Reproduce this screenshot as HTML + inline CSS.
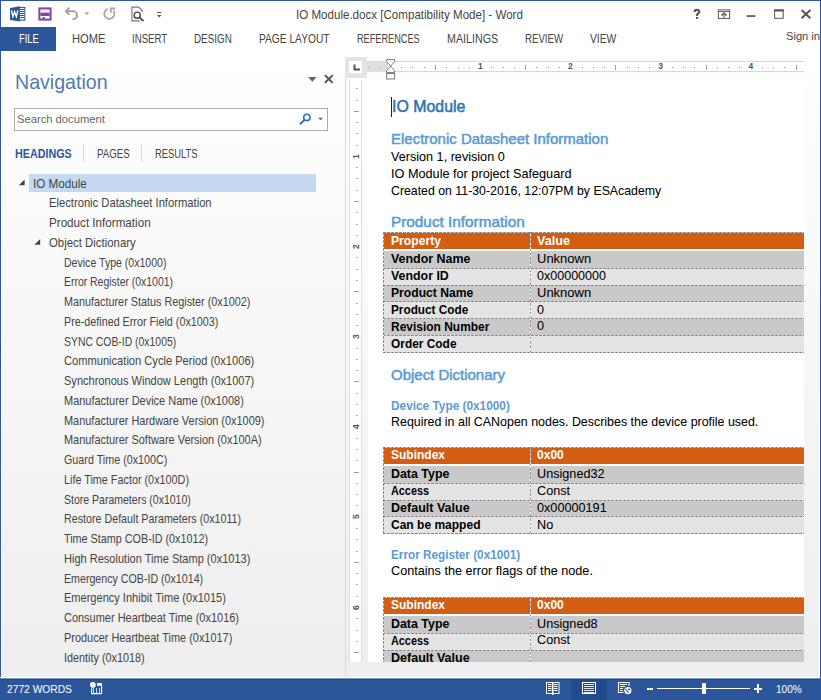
<!DOCTYPE html>
<html><head><meta charset="utf-8">
<style>
*{margin:0;padding:0;box-sizing:border-box}
html,body{width:821px;height:700px;overflow:hidden;background:#fff}
body{position:relative;font-family:"Liberation Sans",sans-serif}
.a{position:absolute}
.t{position:absolute;white-space:pre;transform-origin:0 0;font-family:"Liberation Sans",sans-serif}
.dh{position:absolute;height:1px;background:repeating-linear-gradient(90deg,#8a8a8a 0 2.7px,#fff 2.7px 4px)}
.dv{position:absolute;width:1px;background:repeating-linear-gradient(180deg,#8a8a8a 0 2.7px,#fff 2.7px 4px)}
</style></head><body>
<!-- window border -->
<div class="a" style="left:0;top:0;width:821px;height:1px;background:#2b579a"></div>
<div class="a" style="left:0;top:0;width:1px;height:700px;background:#2b579a"></div>
<div class="a" style="left:820px;top:0;width:1px;height:700px;background:#2b579a;z-index:10"></div>

<!-- FILE tab -->
<div class="a" style="left:1px;top:27px;width:55px;height:24px;background:#2b579a"></div>

<!-- nav pane -->
<div class="a" style="left:1px;top:51px;width:344px;height:626px;background:linear-gradient(#ffffff,#eeeeee)"></div>
<div class="a" style="left:345px;top:57px;width:1px;height:621px;background:#d9d9d9"></div>
<!-- doc area -->
<div class="a" style="left:346px;top:51px;width:473px;height:626px;background:linear-gradient(#ffffff,#eeeeee)"></div>

<div class="a" style="left:1px;top:51px;width:1px;height:627px;background:#fff"></div>
<div class="a" style="left:819px;top:51px;width:1px;height:627px;background:#fff"></div>
<!-- search box -->
<div class="a" style="left:14px;top:108px;width:314px;height:23px;border:1px solid #ababab;background:#fff"></div>
<!-- tab separators -->
<div class="a" style="left:83px;top:144px;width:1px;height:18px;background:#dcdcdc"></div>
<div class="a" style="left:141px;top:144px;width:1px;height:18px;background:#dcdcdc"></div>
<!-- highlight -->
<div class="a" style="left:29px;top:174px;width:287px;height:18px;background:#c5d9f1"></div>

<!-- page -->
<div class="a" style="left:368px;top:80px;width:436px;height:582px;background:#fff"></div>

<!-- ruler tab box -->
<div class="a" style="left:345px;top:57px;width:22px;height:21px;background:#e4e4e4"></div>
<div class="a" style="left:349px;top:61px;width:13px;height:12px;background:#fff"></div>
<!-- horizontal ruler -->
<div class="a" style="left:367px;top:61px;width:21px;height:11px;background:#dedede"></div>
<div class="a" style="left:388px;top:61px;width:416px;height:11px;background:#fff;border-top:1px solid #d8d8d8;border-bottom:1px solid #d8d8d8"></div>
<!-- vertical ruler -->
<div class="a" style="left:349px;top:80px;width:13px;height:582px;background:#fff;border-left:1px solid #dedede;border-right:1px solid #dedede"></div>

<!-- tables -->
<div class="a" style="left:384px;top:233px;width:146px;height:16px;background:#d35d13"></div>
<div class="a" style="left:531px;top:233px;width:273px;height:16px;background:#d35d13"></div>
<div class="a" style="left:384px;top:251px;width:420px;height:17px;background:#c9c9c9"></div>
<div class="a" style="left:384px;top:269px;width:420px;height:16px;background:#e4e4e4"></div>
<div class="a" style="left:384px;top:286px;width:420px;height:15px;background:#c9c9c9"></div>
<div class="a" style="left:384px;top:302px;width:420px;height:16px;background:#e4e4e4"></div>
<div class="a" style="left:384px;top:319px;width:420px;height:16px;background:#c9c9c9"></div>
<div class="a" style="left:384px;top:336px;width:420px;height:16px;background:#e4e4e4"></div>
<div class="dh" style="left:383px;top:232px;width:421px"></div>
<div class="dh" style="left:383px;top:268px;width:421px"></div>
<div class="dh" style="left:383px;top:285px;width:421px"></div>
<div class="dh" style="left:383px;top:301px;width:421px"></div>
<div class="dh" style="left:383px;top:318px;width:421px"></div>
<div class="dh" style="left:383px;top:335px;width:421px"></div>
<div class="dh" style="left:383px;top:352px;width:421px"></div>
<div class="dv" style="left:383px;top:232px;height:121px"></div>
<div class="dv" style="left:530px;top:232px;height:121px;background:repeating-linear-gradient(180deg,#a0a0a0 0 2.5px,#fff 2.5px 4.2px)"></div>
<div class="a" style="left:384px;top:448px;width:146px;height:16px;background:#d35d13"></div>
<div class="a" style="left:531px;top:448px;width:273px;height:16px;background:#d35d13"></div>
<div class="a" style="left:384px;top:466px;width:420px;height:17px;background:#c9c9c9"></div>
<div class="a" style="left:384px;top:484px;width:420px;height:16px;background:#e4e4e4"></div>
<div class="a" style="left:384px;top:501px;width:420px;height:15px;background:#c9c9c9"></div>
<div class="a" style="left:384px;top:517px;width:420px;height:16px;background:#e4e4e4"></div>
<div class="dh" style="left:383px;top:447px;width:421px"></div>
<div class="dh" style="left:383px;top:483px;width:421px"></div>
<div class="dh" style="left:383px;top:500px;width:421px"></div>
<div class="dh" style="left:383px;top:516px;width:421px"></div>
<div class="dh" style="left:383px;top:533px;width:421px"></div>
<div class="dv" style="left:383px;top:447px;height:87px"></div>
<div class="dv" style="left:530px;top:447px;height:87px;background:repeating-linear-gradient(180deg,#a0a0a0 0 2.5px,#fff 2.5px 4.2px)"></div>
<div class="a" style="left:384px;top:598px;width:146px;height:16px;background:#d35d13"></div>
<div class="a" style="left:531px;top:598px;width:273px;height:16px;background:#d35d13"></div>
<div class="a" style="left:384px;top:616px;width:420px;height:17px;background:#c9c9c9"></div>
<div class="a" style="left:384px;top:634px;width:420px;height:16px;background:#e4e4e4"></div>
<div class="a" style="left:384px;top:651px;width:420px;height:11px;background:#c9c9c9"></div>
<div class="dh" style="left:383px;top:597px;width:421px"></div>
<div class="dh" style="left:383px;top:633px;width:421px"></div>
<div class="dh" style="left:383px;top:650px;width:421px"></div>
<div class="dv" style="left:383px;top:597px;height:65px"></div>
<div class="dv" style="left:530px;top:597px;height:65px;background:repeating-linear-gradient(180deg,#a0a0a0 0 2.5px,#fff 2.5px 4.2px)"></div>
<div class="a" style="left:401.1px;top:67px;width:1px;height:1px;background:#888"></div>
<div class="a" style="left:412.4px;top:67px;width:1px;height:1px;background:#888"></div>
<div class="a" style="left:423.6px;top:67px;width:1px;height:1px;background:#888"></div>
<div class="a" style="left:434.9px;top:65px;width:1px;height:5px;background:#999"></div>
<div class="a" style="left:446.2px;top:67px;width:1px;height:1px;background:#888"></div>
<div class="a" style="left:457.5px;top:67px;width:1px;height:1px;background:#888"></div>
<div class="a" style="left:468.7px;top:67px;width:1px;height:1px;background:#888"></div>
<div class="a" style="left:491.3px;top:67px;width:1px;height:1px;background:#888"></div>
<div class="a" style="left:502.6px;top:67px;width:1px;height:1px;background:#888"></div>
<div class="a" style="left:513.8px;top:67px;width:1px;height:1px;background:#888"></div>
<div class="a" style="left:525.1px;top:65px;width:1px;height:5px;background:#999"></div>
<div class="a" style="left:536.4px;top:67px;width:1px;height:1px;background:#888"></div>
<div class="a" style="left:547.6px;top:67px;width:1px;height:1px;background:#888"></div>
<div class="a" style="left:558.9px;top:67px;width:1px;height:1px;background:#888"></div>
<div class="a" style="left:581.5px;top:67px;width:1px;height:1px;background:#888"></div>
<div class="a" style="left:592.8px;top:67px;width:1px;height:1px;background:#888"></div>
<div class="a" style="left:604.0px;top:67px;width:1px;height:1px;background:#888"></div>
<div class="a" style="left:615.3px;top:65px;width:1px;height:5px;background:#999"></div>
<div class="a" style="left:626.6px;top:67px;width:1px;height:1px;background:#888"></div>
<div class="a" style="left:637.9px;top:67px;width:1px;height:1px;background:#888"></div>
<div class="a" style="left:649.1px;top:67px;width:1px;height:1px;background:#888"></div>
<div class="a" style="left:671.7px;top:67px;width:1px;height:1px;background:#888"></div>
<div class="a" style="left:683.0px;top:67px;width:1px;height:1px;background:#888"></div>
<div class="a" style="left:694.2px;top:67px;width:1px;height:1px;background:#888"></div>
<div class="a" style="left:705.5px;top:65px;width:1px;height:5px;background:#999"></div>
<div class="a" style="left:716.8px;top:67px;width:1px;height:1px;background:#888"></div>
<div class="a" style="left:728.0px;top:67px;width:1px;height:1px;background:#888"></div>
<div class="a" style="left:739.3px;top:67px;width:1px;height:1px;background:#888"></div>
<div class="a" style="left:761.9px;top:67px;width:1px;height:1px;background:#888"></div>
<div class="a" style="left:773.2px;top:67px;width:1px;height:1px;background:#888"></div>
<div class="a" style="left:784.4px;top:67px;width:1px;height:1px;background:#888"></div>
<div class="a" style="left:795.7px;top:65px;width:1px;height:5px;background:#999"></div>
<div class="t" style="left:477.9px;top:62.3px;font-size:8.5px;line-height:8.5px;font-weight:700;color:#555">1</div>
<div class="t" style="left:568.1px;top:62.3px;font-size:8.5px;line-height:8.5px;font-weight:700;color:#555">2</div>
<div class="t" style="left:658.3px;top:62.3px;font-size:8.5px;line-height:8.5px;font-weight:700;color:#555">3</div>
<div class="t" style="left:748.5px;top:62.3px;font-size:8.5px;line-height:8.5px;font-weight:700;color:#555">4</div>
<div class="a" style="left:355.5px;top:88.2px;width:2px;height:1px;background:#b0b0b0"></div>
<div class="a" style="left:355.5px;top:99.5px;width:2px;height:1px;background:#b0b0b0"></div>
<div class="a" style="left:354px;top:110.8px;width:5px;height:1px;background:#999"></div>
<div class="a" style="left:355.5px;top:122.1px;width:2px;height:1px;background:#b0b0b0"></div>
<div class="a" style="left:355.5px;top:133.4px;width:2px;height:1px;background:#b0b0b0"></div>
<div class="a" style="left:355.5px;top:144.6px;width:2px;height:1px;background:#b0b0b0"></div>
<div class="t" style="left:351.5px;top:150.6px;font-size:8.5px;line-height:8.5px;font-weight:700;color:#555;transform:rotate(-90deg);transform-origin:4px 4px">1</div>
<div class="a" style="left:355.5px;top:167.2px;width:2px;height:1px;background:#b0b0b0"></div>
<div class="a" style="left:355.5px;top:178.4px;width:2px;height:1px;background:#b0b0b0"></div>
<div class="a" style="left:355.5px;top:189.7px;width:2px;height:1px;background:#b0b0b0"></div>
<div class="a" style="left:354px;top:201.0px;width:5px;height:1px;background:#999"></div>
<div class="a" style="left:355.5px;top:212.3px;width:2px;height:1px;background:#b0b0b0"></div>
<div class="a" style="left:355.5px;top:223.6px;width:2px;height:1px;background:#b0b0b0"></div>
<div class="a" style="left:355.5px;top:234.8px;width:2px;height:1px;background:#b0b0b0"></div>
<div class="t" style="left:351.5px;top:240.8px;font-size:8.5px;line-height:8.5px;font-weight:700;color:#555;transform:rotate(-90deg);transform-origin:4px 4px">2</div>
<div class="a" style="left:355.5px;top:257.4px;width:2px;height:1px;background:#b0b0b0"></div>
<div class="a" style="left:355.5px;top:268.7px;width:2px;height:1px;background:#b0b0b0"></div>
<div class="a" style="left:355.5px;top:279.9px;width:2px;height:1px;background:#b0b0b0"></div>
<div class="a" style="left:354px;top:291.2px;width:5px;height:1px;background:#999"></div>
<div class="a" style="left:355.5px;top:302.5px;width:2px;height:1px;background:#b0b0b0"></div>
<div class="a" style="left:355.5px;top:313.8px;width:2px;height:1px;background:#b0b0b0"></div>
<div class="a" style="left:355.5px;top:325.0px;width:2px;height:1px;background:#b0b0b0"></div>
<div class="t" style="left:351.5px;top:331.0px;font-size:8.5px;line-height:8.5px;font-weight:700;color:#555;transform:rotate(-90deg);transform-origin:4px 4px">3</div>
<div class="a" style="left:355.5px;top:347.6px;width:2px;height:1px;background:#b0b0b0"></div>
<div class="a" style="left:355.5px;top:358.9px;width:2px;height:1px;background:#b0b0b0"></div>
<div class="a" style="left:355.5px;top:370.1px;width:2px;height:1px;background:#b0b0b0"></div>
<div class="a" style="left:354px;top:381.4px;width:5px;height:1px;background:#999"></div>
<div class="a" style="left:355.5px;top:392.7px;width:2px;height:1px;background:#b0b0b0"></div>
<div class="a" style="left:355.5px;top:403.9px;width:2px;height:1px;background:#b0b0b0"></div>
<div class="a" style="left:355.5px;top:415.2px;width:2px;height:1px;background:#b0b0b0"></div>
<div class="t" style="left:351.5px;top:421.2px;font-size:8.5px;line-height:8.5px;font-weight:700;color:#555;transform:rotate(-90deg);transform-origin:4px 4px">4</div>
<div class="a" style="left:355.5px;top:437.8px;width:2px;height:1px;background:#b0b0b0"></div>
<div class="a" style="left:355.5px;top:449.1px;width:2px;height:1px;background:#b0b0b0"></div>
<div class="a" style="left:355.5px;top:460.3px;width:2px;height:1px;background:#b0b0b0"></div>
<div class="a" style="left:354px;top:471.6px;width:5px;height:1px;background:#999"></div>
<div class="a" style="left:355.5px;top:482.9px;width:2px;height:1px;background:#b0b0b0"></div>
<div class="a" style="left:355.5px;top:494.1px;width:2px;height:1px;background:#b0b0b0"></div>
<div class="a" style="left:355.5px;top:505.4px;width:2px;height:1px;background:#b0b0b0"></div>
<div class="t" style="left:351.5px;top:511.4px;font-size:8.5px;line-height:8.5px;font-weight:700;color:#555;transform:rotate(-90deg);transform-origin:4px 4px">5</div>
<div class="a" style="left:355.5px;top:528.0px;width:2px;height:1px;background:#b0b0b0"></div>
<div class="a" style="left:355.5px;top:539.2px;width:2px;height:1px;background:#b0b0b0"></div>
<div class="a" style="left:355.5px;top:550.5px;width:2px;height:1px;background:#b0b0b0"></div>
<div class="a" style="left:354px;top:561.8px;width:5px;height:1px;background:#999"></div>
<div class="a" style="left:355.5px;top:573.1px;width:2px;height:1px;background:#b0b0b0"></div>
<div class="a" style="left:355.5px;top:584.4px;width:2px;height:1px;background:#b0b0b0"></div>
<div class="a" style="left:355.5px;top:595.6px;width:2px;height:1px;background:#b0b0b0"></div>
<div class="t" style="left:351.5px;top:601.6px;font-size:8.5px;line-height:8.5px;font-weight:700;color:#555;transform:rotate(-90deg);transform-origin:4px 4px">6</div>
<div class="a" style="left:355.5px;top:618.2px;width:2px;height:1px;background:#b0b0b0"></div>
<div class="a" style="left:355.5px;top:629.5px;width:2px;height:1px;background:#b0b0b0"></div>
<div class="a" style="left:355.5px;top:640.7px;width:2px;height:1px;background:#b0b0b0"></div>
<div class="a" style="left:354px;top:652.0px;width:5px;height:1px;background:#999"></div>
<div class="a" style="left:367.5px;top:67px;width:1px;height:1px;background:#999"></div>
<div class="a" style="left:378.8px;top:67px;width:1px;height:1px;background:#999"></div>

<!-- cursor -->
<div class="a" style="left:391px;top:97px;width:1px;height:20px;background:#222"></div>

<!-- status bar -->
<div class="a" style="left:0;top:677px;width:821px;height:1px;background:#fff"></div>
<div class="a" style="left:0;top:678px;width:821px;height:22px;background:#2b579a"></div>
<div class="a" style="left:571px;top:678px;width:36px;height:22px;background:#214b8b"></div>
<div class="a" style="left:1px;top:678px;width:819px;height:1px;background:#7f97c0"></div>
<div class="a" style="left:1px;top:679px;width:819px;height:1px;background:#1f4b8d"></div>
<!-- zoom slider -->
<div class="a" style="left:647px;top:688px;width:6px;height:2px;background:#fff"></div>
<div class="a" style="left:657px;top:688px;width:93px;height:1px;background:#fff"></div>
<div class="a" style="left:702px;top:683px;width:4px;height:11px;background:#fff"></div>
<div class="a" style="left:754px;top:688px;width:8px;height:2px;background:#fff"></div>
<div class="a" style="left:757px;top:684px;width:2px;height:9px;background:#fff"></div>

<!-- Word icon -->
<svg class="a" style="left:0;top:0" width="60" height="27" viewBox="0 0 60 27">
  <rect x="19" y="7.5" width="5.8" height="12.6" fill="#fff" stroke="#2b579a" stroke-width="1.1"/>
  <g stroke="#2b579a" stroke-width="1">
    <line x1="20" y1="9.5" x2="24.2" y2="9.5"/><line x1="20" y1="11.5" x2="24.2" y2="11.5"/><line x1="20" y1="13.5" x2="24.2" y2="13.5"/>
    <line x1="20" y1="15.5" x2="24.2" y2="15.5"/><line x1="20" y1="17.5" x2="24.2" y2="17.5"/>
  </g>
  <polygon points="10,8 19.8,6.3 19.8,21.5 10,20" fill="#2b579a"/>
  <path d="M11.4,10.4 L12.9,16.6 L14.6,11.8 L16.3,16.6 L17.8,10.4" fill="none" stroke="#fff" stroke-width="1.4" stroke-linejoin="miter"/>
  <!-- save -->
  <rect x="39.4" y="8.4" width="11.2" height="11.2" fill="none" stroke="#80459f" stroke-width="2"/>
  <rect x="40.4" y="12.6" width="9.2" height="3.4" fill="#80459f"/>
  <rect x="42.6" y="17" width="2.2" height="3" fill="#80459f"/>
  <line x1="41.5" y1="10.5" x2="48.5" y2="10.5" stroke="#e6d8ee" stroke-width="1"/>
</svg>
<!-- undo / redo / preview / customize -->
<svg class="a" style="left:60px;top:0" width="110" height="27" viewBox="60 0 110 27">
  <g fill="none" stroke="#9d9d9d" stroke-width="1.8" stroke-linecap="butt">
    <path d="M66,11.2 L73,11.2 A4,4 0 0 1 73,19.2 L72.5,19.2"/>
    <path d="M69.5,7.6 L65.9,11.2 L69.5,14.8"/>
  </g>
  <polygon points="84.5,12.3 89.3,12.3 86.9,14.9" fill="#a0a0a0"/>
  <g fill="none" stroke="#a6a6a6" stroke-width="1.8">
    <path d="M107.6,8.9 A5.1,5.1 0 1 0 113.4,10.6"/>
    <path d="M115.2,8.5 L110.7,8.5 L110.9,12.8"/>
  </g>
  <!-- print preview -->
  <path d="M139.8,20.9 L131.9,20.9 L131.9,7.1 L138.6,7.1 L142.3,10.8 L142.3,12" fill="none" stroke="#777" stroke-width="1.1"/>
  <circle cx="137.2" cy="15.2" r="3.1" fill="none" stroke="#444" stroke-width="1.4"/>
  <line x1="139.5" y1="17.6" x2="143.6" y2="21" stroke="#555" stroke-width="2"/>
  <rect x="157" y="12" width="4.4" height="1" fill="#555"/>
  <polygon points="157,14.9 161.4,14.9 159.2,17.5" fill="#555"/>
</svg>
<!-- window controls -->
<svg class="a" style="left:680px;top:0" width="140" height="27" viewBox="680 0 140 27">
  <path d="M694.6,12 C694.6,9.2 699.4,9.2 699.4,11.6 C699.4,13.3 697.1,13.4 697.1,15.2 L697.1,15.9" fill="none" stroke="#555" stroke-width="2.1"/>
  <rect x="696" y="17" width="2.2" height="1.9" fill="#555"/>
  <rect x="718.4" y="9.9" width="11.2" height="8.6" fill="none" stroke="#666" stroke-width="1.1"/>
  <line x1="718.4" y1="11.6" x2="729.6" y2="11.6" stroke="#666" stroke-width="1"/>
  <line x1="724" y1="13" x2="724" y2="18.3" stroke="#666" stroke-width="1.1"/>
  <path d="M721.4,15.6 L724,13 L726.6,15.6" fill="none" stroke="#666" stroke-width="1.5"/>
  <rect x="746.7" y="15.2" width="8.6" height="1.7" fill="#555"/>
  <rect x="774.6" y="10" width="8.6" height="8.3" fill="none" stroke="#555" stroke-width="1"/>
  <rect x="774.1" y="9.5" width="9.6" height="2" fill="#555"/>
  <path d="M801.6,10 L810.4,18.2 M810.4,10 L801.6,18.2" stroke="#555" stroke-width="2"/>
</svg>
<!-- nav pane controls -->
<svg class="a" style="left:0;top:60px" width="345" height="200" viewBox="0 60 345 200">
  <polygon points="308,77 316.6,77 312.3,81.8" fill="#666"/>
  <path d="M324.9,75.1 L332.7,82.9 M332.7,75.1 L324.9,82.9" stroke="#555" stroke-width="2"/>
  <!-- magnifier -->
  <circle cx="306.9" cy="117.4" r="3.2" fill="none" stroke="#2b72b8" stroke-width="1.5"/>
  <line x1="304.6" y1="119.7" x2="300" y2="124.3" stroke="#2b72b8" stroke-width="2"/>
  <polygon points="318,117.7 323,117.7 320.5,120.2" fill="#666"/>
  <!-- triangles -->
  <polygon points="24.6,179.4 24.6,185.2 18.8,185.2" fill="#444"/>
  <polygon points="40.2,238.9 40.2,244.7 34.4,244.7" fill="#444"/>
</svg>
<!-- ruler L + indent marker -->
<svg class="a" style="left:345px;top:55px" width="60" height="26" viewBox="345 55 60 26">
  <path d="M354.5,64.6 L354.5,69.6 L360,69.6" fill="none" stroke="#555" stroke-width="2"/>
  <path d="M386.6,59.6 L394.6,59.6 L394.6,61.6 L390.6,66.1 L394.6,70.6 L394.6,72.6 L386.6,72.6 L386.6,70.6 L390.6,66.1 L386.6,61.6 Z" fill="#fff" stroke="#7a7a7a" stroke-width="1"/>
  <rect x="386.6" y="73.5" width="8" height="5.5" fill="#fff" stroke="#7a7a7a" stroke-width="1"/>
</svg>
<!-- status bar icons -->
<svg class="a" style="left:80px;top:678px" width="560" height="22" viewBox="80 678 560 22">
  <!-- word count icon -->
  <circle cx="92.9" cy="684.9" r="2.8" fill="#fff"/>
  <rect x="97" y="683" width="5" height="2.8" fill="#fff"/>
  <path d="M91.6,688.3 L91.6,693.6 L101.6,693.6 L101.6,686" fill="none" stroke="#fff" stroke-width="1.1"/>
  <g stroke="#fff" stroke-width="1" stroke-opacity="0.75"><line x1="93.5" y1="688" x2="93.5" y2="693"/><line x1="96.5" y1="688" x2="96.5" y2="693"/><line x1="99.5" y1="688" x2="99.5" y2="693"/></g>
  <!-- read mode -->
  <rect x="546.5" y="682.5" width="12.5" height="11" fill="none" stroke="#fff" stroke-width="1"/>
  <line x1="552.75" y1="682" x2="552.75" y2="695" stroke="#fff" stroke-width="1.5"/>
  <g stroke="#fff" stroke-width="1"><line x1="548" y1="684.5" x2="551.5" y2="684.5"/><line x1="548" y1="686.5" x2="551.5" y2="686.5"/><line x1="548" y1="688.5" x2="551.5" y2="688.5"/><line x1="548" y1="690.5" x2="551.5" y2="690.5"/>
  <line x1="554" y1="684.5" x2="557.5" y2="684.5"/><line x1="554" y1="686.5" x2="557.5" y2="686.5"/><line x1="554" y1="688.5" x2="557.5" y2="688.5"/><line x1="554" y1="690.5" x2="557.5" y2="690.5"/></g>
  <!-- print layout -->
  <rect x="582.5" y="682.5" width="13" height="11" fill="none" stroke="#fff" stroke-width="1"/>
  <g stroke="#fff" stroke-width="1" stroke-opacity="0.85"><line x1="584" y1="684.5" x2="594" y2="684.5"/><line x1="584" y1="686.5" x2="594" y2="686.5"/><line x1="584" y1="688.5" x2="594" y2="688.5"/><line x1="584" y1="690.5" x2="594" y2="690.5"/><line x1="584" y1="692.5" x2="594" y2="692.5"/></g>
  <!-- web layout -->
  <path d="M623.5,692.5 L618.5,692.5 L618.5,682.5 L629,682.5 L629,686" fill="none" stroke="#fff" stroke-width="1.1"/>
  <g stroke="#fff" stroke-width="1"><line x1="620" y1="684.5" x2="627" y2="684.5"/><line x1="620" y1="686.5" x2="625" y2="686.5"/><line x1="620" y1="688.5" x2="623" y2="688.5"/><line x1="620" y1="690.5" x2="622.5" y2="690.5"/></g>
  <circle cx="627.9" cy="690.6" r="4.2" fill="#2b579a"/>
  <circle cx="627.9" cy="690.6" r="3.6" fill="#fff"/>
  <path d="M625.6,688.8 L628.6,693" stroke="#2b579a" stroke-width="1.1"/>
  <ellipse cx="629.2" cy="689.4" rx="1.1" ry="1" fill="#2b579a"/>
</svg>


<div class="t" style="left:295.8px;top:8.93px;font-size:12.6px;line-height:12.6px;color:#444;transform:scaleX(0.9192);">IO Module.docx [Compatibility Mode] - Word</div>
<div class="t" style="left:18.8px;top:34.03px;font-size:11.9px;line-height:11.9px;color:#fff;transform:scaleX(0.7881);">FILE</div>
<div class="t" style="left:71.9px;top:34.23px;font-size:11.9px;line-height:11.9px;color:#444;transform:scaleX(0.9359);">HOME</div>
<div class="t" style="left:131.8px;top:34.23px;font-size:11.9px;line-height:11.9px;color:#444;transform:scaleX(0.8112);">INSERT</div>
<div class="t" style="left:194.2px;top:34.23px;font-size:11.9px;line-height:11.9px;color:#444;transform:scaleX(0.8291);">DESIGN</div>
<div class="t" style="left:259.0px;top:34.23px;font-size:11.9px;line-height:11.9px;color:#444;transform:scaleX(0.8581);">PAGE LAYOUT</div>
<div class="t" style="left:357.1px;top:34.23px;font-size:11.9px;line-height:11.9px;color:#444;transform:scaleX(0.7714);">REFERENCES</div>
<div class="t" style="left:447.3px;top:34.23px;font-size:11.9px;line-height:11.9px;color:#444;transform:scaleX(0.8992);">MAILINGS</div>
<div class="t" style="left:524.9px;top:34.23px;font-size:11.9px;line-height:11.9px;color:#444;transform:scaleX(0.8120);">REVIEW</div>
<div class="t" style="left:589.5px;top:34.23px;font-size:11.9px;line-height:11.9px;color:#444;transform:scaleX(0.8654);">VIEW</div>
<div class="t" style="left:785.8px;top:30.28px;font-size:11.6px;line-height:11.6px;color:#444;transform:scaleX(0.9590);">Sign in</div>
<div class="t" style="left:14.9px;top:71.73px;font-size:20.4px;line-height:20.4px;color:#5079b5;transform:scaleX(0.9610);">Navigation</div>
<div class="t" style="left:16.5px;top:113.86px;font-size:10.8px;line-height:10.8px;color:#666;transform:scaleX(1.0375);">Search document</div>
<div class="t" style="left:15.3px;top:147.73px;font-size:12.6px;line-height:12.6px;font-weight:700;color:#2b579a;transform:scaleX(0.8543);">HEADINGS</div>
<div class="t" style="left:96.7px;top:147.73px;font-size:12.6px;line-height:12.6px;color:#444;transform:scaleX(0.7676);">PAGES</div>
<div class="t" style="left:155.0px;top:147.73px;font-size:12.6px;line-height:12.6px;color:#444;transform:scaleX(0.7453);">RESULTS</div>
<div class="t" style="left:33.2px;top:177.57px;font-size:12.2px;line-height:12.2px;color:#444;transform:scaleX(0.9567);">IO Module</div>
<div class="t" style="left:48.9px;top:197.32px;font-size:12.2px;line-height:12.2px;color:#444;transform:scaleX(0.9196);">Electronic Datasheet Information</div>
<div class="t" style="left:48.9px;top:217.07px;font-size:12.2px;line-height:12.2px;color:#444;transform:scaleX(0.9553);">Product Information</div>
<div class="t" style="left:48.9px;top:236.82px;font-size:12.2px;line-height:12.2px;color:#444;transform:scaleX(0.9343);">Object Dictionary</div>
<div class="t" style="left:63.7px;top:256.57px;font-size:12.2px;line-height:12.2px;color:#444;transform:scaleX(0.8662);">Device Type (0x1000)</div>
<div class="t" style="left:63.7px;top:276.32px;font-size:12.2px;line-height:12.2px;color:#444;transform:scaleX(0.8560);">Error Register (0x1001)</div>
<div class="t" style="left:63.7px;top:296.07px;font-size:12.2px;line-height:12.2px;color:#444;transform:scaleX(0.8876);">Manufacturer Status Register (0x1002)</div>
<div class="t" style="left:63.7px;top:315.82px;font-size:12.2px;line-height:12.2px;color:#444;transform:scaleX(0.8828);">Pre-defined Error Field (0x1003)</div>
<div class="t" style="left:63.7px;top:335.57px;font-size:12.2px;line-height:12.2px;color:#444;transform:scaleX(0.8539);">SYNC COB-ID (0x1005)</div>
<div class="t" style="left:63.7px;top:355.32px;font-size:12.2px;line-height:12.2px;color:#444;transform:scaleX(0.9121);">Communication Cycle Period (0x1006)</div>
<div class="t" style="left:63.7px;top:375.07px;font-size:12.2px;line-height:12.2px;color:#444;transform:scaleX(0.9061);">Synchronous Window Length (0x1007)</div>
<div class="t" style="left:63.7px;top:394.82px;font-size:12.2px;line-height:12.2px;color:#444;transform:scaleX(0.8998);">Manufacturer Device Name (0x1008)</div>
<div class="t" style="left:63.7px;top:414.57px;font-size:12.2px;line-height:12.2px;color:#444;transform:scaleX(0.8969);">Manufacturer Hardware Version (0x1009)</div>
<div class="t" style="left:63.7px;top:434.32px;font-size:12.2px;line-height:12.2px;color:#444;transform:scaleX(0.8975);">Manufacturer Software Version (0x100A)</div>
<div class="t" style="left:63.7px;top:454.07px;font-size:12.2px;line-height:12.2px;color:#444;transform:scaleX(0.8823);">Guard Time (0x100C)</div>
<div class="t" style="left:63.7px;top:473.82px;font-size:12.2px;line-height:12.2px;color:#444;transform:scaleX(0.8872);">Life Time Factor (0x100D)</div>
<div class="t" style="left:63.7px;top:493.57px;font-size:12.2px;line-height:12.2px;color:#444;transform:scaleX(0.8626);">Store Parameters (0x1010)</div>
<div class="t" style="left:63.7px;top:513.32px;font-size:12.2px;line-height:12.2px;color:#444;transform:scaleX(0.8783);">Restore Default Parameters (0x1011)</div>
<div class="t" style="left:63.7px;top:533.07px;font-size:12.2px;line-height:12.2px;color:#444;transform:scaleX(0.8852);">Time Stamp COB-ID (0x1012)</div>
<div class="t" style="left:63.7px;top:552.82px;font-size:12.2px;line-height:12.2px;color:#444;transform:scaleX(0.9051);">High Resolution Time Stamp (0x1013)</div>
<div class="t" style="left:63.7px;top:572.57px;font-size:12.2px;line-height:12.2px;color:#444;transform:scaleX(0.8739);">Emergency COB-ID (0x1014)</div>
<div class="t" style="left:63.7px;top:592.32px;font-size:12.2px;line-height:12.2px;color:#444;transform:scaleX(0.9053);">Emergency Inhibit Time (0x1015)</div>
<div class="t" style="left:63.7px;top:612.07px;font-size:12.2px;line-height:12.2px;color:#444;transform:scaleX(0.9001);">Consumer Heartbeat Time (0x1016)</div>
<div class="t" style="left:63.7px;top:631.82px;font-size:12.2px;line-height:12.2px;color:#444;transform:scaleX(0.8969);">Producer Heartbeat Time (0x1017)</div>
<div class="t" style="left:63.7px;top:651.57px;font-size:12.2px;line-height:12.2px;color:#444;transform:scaleX(0.8877);">Identity (0x1018)</div>
<div class="t" style="left:392.3px;top:98.07px;font-size:16.1px;line-height:16.1px;color:#2e74b5;transform:scaleX(0.9886);-webkit-text-stroke:0.55px #2e74b5">IO Module</div>
<div class="t" style="left:391.0px;top:132.92px;font-size:13.8px;line-height:13.8px;color:#5b9bd5;transform:scaleX(1.0852);-webkit-text-stroke:0.5px #5b9bd5">Electronic Datasheet Information</div>
<div class="t" style="left:391.0px;top:151.30px;font-size:12.4px;line-height:12.4px;color:#000;transform:scaleX(1.0190);-webkit-text-stroke:0.05px #000">Version 1, revision 0</div>
<div class="t" style="left:391.0px;top:168.40px;font-size:12.4px;line-height:12.4px;color:#000;transform:scaleX(1.0237);-webkit-text-stroke:0.05px #000">IO Module for project Safeguard</div>
<div class="t" style="left:391.0px;top:184.90px;font-size:12.4px;line-height:12.4px;color:#000;transform:scaleX(0.9940);-webkit-text-stroke:0.05px #000">Created on 11-30-2016, 12:07PM by ESAcademy</div>
<div class="t" style="left:390.9px;top:215.92px;font-size:13.8px;line-height:13.8px;color:#5b9bd5;transform:scaleX(1.1104);-webkit-text-stroke:0.5px #5b9bd5">Product Information</div>
<div class="t" style="left:391.1px;top:368.72px;font-size:13.8px;line-height:13.8px;color:#5b9bd5;transform:scaleX(1.0852);-webkit-text-stroke:0.5px #5b9bd5">Object Dictionary</div>
<div class="t" style="left:391.1px;top:399.76px;font-size:12.8px;line-height:12.8px;font-weight:700;color:#5b9bd5;transform:scaleX(0.9251);">Device Type (0x1000)</div>
<div class="t" style="left:391.1px;top:416.20px;font-size:12.4px;line-height:12.4px;color:#000;transform:scaleX(1.0024);-webkit-text-stroke:0.05px #000">Required in all CANopen nodes. Describes the device profile used.</div>
<div class="t" style="left:391.0px;top:549.36px;font-size:12.8px;line-height:12.8px;font-weight:700;color:#5b9bd5;transform:scaleX(0.9173);">Error Register (0x1001)</div>
<div class="t" style="left:391.0px;top:564.70px;font-size:12.4px;line-height:12.4px;color:#000;transform:scaleX(1.0213);-webkit-text-stroke:0.05px #000">Contains the error flags of the node.</div>
<div class="t" style="left:390.9px;top:235.04px;font-size:12.0px;line-height:12.0px;font-weight:700;color:#fff;transform:scaleX(1.0150);">Property</div>
<div class="t" style="left:537.2px;top:235.04px;font-size:12.0px;line-height:12.0px;font-weight:700;color:#fff;transform:scaleX(1.0523);">Value</div>
<div class="t" style="left:390.9px;top:253.34px;font-size:12.0px;line-height:12.0px;font-weight:700;color:#000;transform:scaleX(1.0352);">Vendor Name</div>
<div class="t" style="left:537.2px;top:253.00px;font-size:12.4px;line-height:12.4px;color:#000;transform:scaleX(1.0492);-webkit-text-stroke:0.05px #000">Unknown</div>
<div class="t" style="left:390.9px;top:270.19px;font-size:12.0px;line-height:12.0px;font-weight:700;color:#000;transform:scaleX(1.0319);">Vendor ID</div>
<div class="t" style="left:537.2px;top:269.85px;font-size:12.4px;line-height:12.4px;color:#000;transform:scaleX(1.0115);-webkit-text-stroke:0.05px #000">0x00000000</div>
<div class="t" style="left:390.9px;top:287.04px;font-size:12.0px;line-height:12.0px;font-weight:700;color:#000;transform:scaleX(1.0116);">Product Name</div>
<div class="t" style="left:537.2px;top:286.70px;font-size:12.4px;line-height:12.4px;color:#000;transform:scaleX(1.0492);-webkit-text-stroke:0.05px #000">Unknown</div>
<div class="t" style="left:390.9px;top:303.89px;font-size:12.0px;line-height:12.0px;font-weight:700;color:#000;transform:scaleX(0.9813);">Product Code</div>
<div class="t" style="left:537.2px;top:303.55px;font-size:12.4px;line-height:12.4px;color:#000;transform:scaleX(1.0213);-webkit-text-stroke:0.05px #000">0</div>
<div class="t" style="left:390.9px;top:320.74px;font-size:12.0px;line-height:12.0px;font-weight:700;color:#000;transform:scaleX(0.9969);">Revision Number</div>
<div class="t" style="left:537.2px;top:320.40px;font-size:12.4px;line-height:12.4px;color:#000;transform:scaleX(1.0213);-webkit-text-stroke:0.05px #000">0</div>
<div class="t" style="left:390.9px;top:337.59px;font-size:12.0px;line-height:12.0px;font-weight:700;color:#000;transform:scaleX(0.9922);">Order Code</div>
<div class="t" style="left:390.9px;top:449.44px;font-size:12.0px;line-height:12.0px;font-weight:700;color:#fff;transform:scaleX(0.9997);">Subindex</div>
<div class="t" style="left:537.2px;top:449.44px;font-size:12.0px;line-height:12.0px;font-weight:700;color:#fff;transform:scaleX(1.0048);">0x00</div>
<div class="t" style="left:390.9px;top:468.34px;font-size:12.0px;line-height:12.0px;font-weight:700;color:#000;transform:scaleX(1.0342);">Data Type</div>
<div class="t" style="left:537.2px;top:468.00px;font-size:12.4px;line-height:12.4px;color:#000;transform:scaleX(1.0213);-webkit-text-stroke:0.05px #000">Unsigned32</div>
<div class="t" style="left:390.9px;top:485.19px;font-size:12.0px;line-height:12.0px;font-weight:700;color:#000;transform:scaleX(0.9038);">Access</div>
<div class="t" style="left:537.2px;top:484.85px;font-size:12.4px;line-height:12.4px;color:#000;transform:scaleX(1.0213);-webkit-text-stroke:0.05px #000">Const</div>
<div class="t" style="left:390.9px;top:502.04px;font-size:12.0px;line-height:12.0px;font-weight:700;color:#000;transform:scaleX(1.0443);">Default Value</div>
<div class="t" style="left:537.2px;top:501.70px;font-size:12.4px;line-height:12.4px;color:#000;transform:scaleX(1.0213);-webkit-text-stroke:0.05px #000">0x00000191</div>
<div class="t" style="left:390.9px;top:518.89px;font-size:12.0px;line-height:12.0px;font-weight:700;color:#000;transform:scaleX(1.0016);">Can be mapped</div>
<div class="t" style="left:537.2px;top:518.55px;font-size:12.4px;line-height:12.4px;color:#000;transform:scaleX(1.0213);-webkit-text-stroke:0.05px #000">No</div>
<div class="t" style="left:390.9px;top:598.94px;font-size:12.0px;line-height:12.0px;font-weight:700;color:#fff;transform:scaleX(0.9997);">Subindex</div>
<div class="t" style="left:537.2px;top:598.94px;font-size:12.0px;line-height:12.0px;font-weight:700;color:#fff;transform:scaleX(1.0048);">0x00</div>
<div class="t" style="left:390.9px;top:617.94px;font-size:12.0px;line-height:12.0px;font-weight:700;color:#000;transform:scaleX(1.0342);">Data Type</div>
<div class="t" style="left:537.2px;top:617.60px;font-size:12.4px;line-height:12.4px;color:#000;transform:scaleX(1.0213);-webkit-text-stroke:0.05px #000">Unsigned8</div>
<div class="t" style="left:390.9px;top:634.79px;font-size:12.0px;line-height:12.0px;font-weight:700;color:#000;transform:scaleX(0.9038);">Access</div>
<div class="t" style="left:537.2px;top:634.45px;font-size:12.4px;line-height:12.4px;color:#000;transform:scaleX(1.0213);-webkit-text-stroke:0.05px #000">Const</div>
<div class="t" style="left:390.9px;top:651.64px;font-size:12.0px;line-height:12.0px;font-weight:700;color:#000;transform:scaleX(1.0443);">Default Value</div>
<div class="t" style="left:6.8px;top:683.53px;font-size:10.6px;line-height:10.6px;color:#fff;transform:scaleX(0.9669);">2772 WORDS</div>
<div class="t" style="left:776.2px;top:683.53px;font-size:10.6px;line-height:10.6px;color:#fff;transform:scaleX(0.9480);">100%</div>
</body></html>
